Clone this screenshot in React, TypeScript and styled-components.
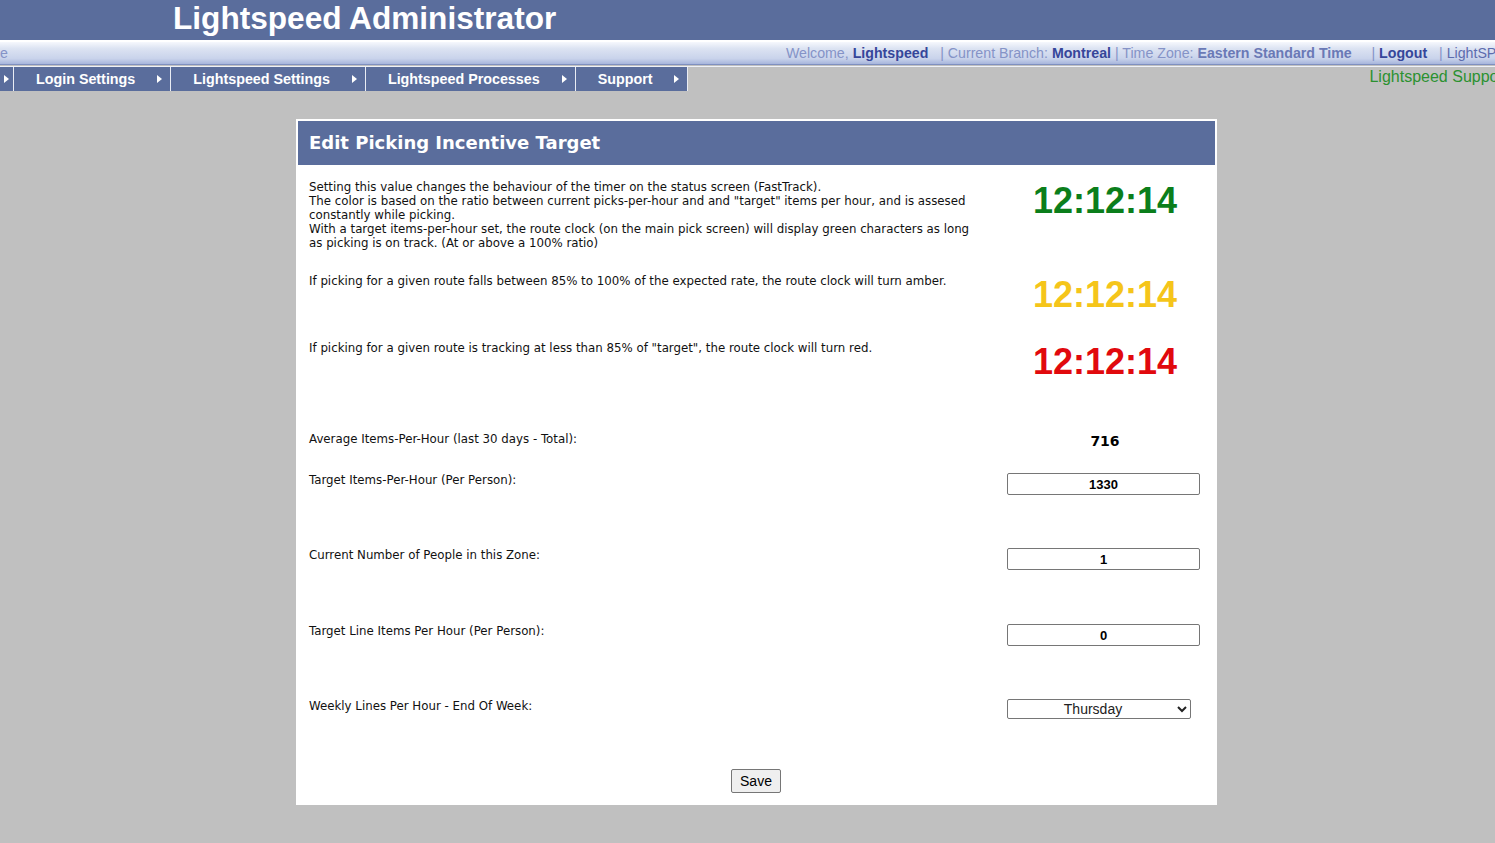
import styled, { createGlobalStyle } from "styled-components";

const MENU = ["Login Settings", "Lightspeed Settings", "Lightspeed Processes", "Support"];
const DAYS = ["Monday", "Tuesday", "Wednesday", "Thursday", "Friday", "Saturday", "Sunday"];

const BLUE = "#5a6d9c";

export default function App() {
  return (
    <>
      <GlobalStyle />
      <TitleBar>
        <Title>Lightspeed Administrator</Title>
      </TitleBar>
      <InfoBar>
        <Muted>e</Muted>
        <InfoText>
          <Muted>Welcome, </Muted>
          <Strong>Lightspeed</Strong>
          <Muted>{"   | Current Branch: "}</Muted>
          <Strong>Montreal</Strong>
          <Muted>{" | Time Zone: "}</Muted>
          <Strong $soft>Eastern Standard Time</Strong>
          <Muted>{"     | "}</Muted>
          <Strong>Logout</Strong>
          <Muted>{"   | "}</Muted>
          <Soft>LightSPEED Home</Soft>
        </InfoText>
      </InfoBar>
      <MenuBar>
        <MenuItem $stub>
          <Arrow />
        </MenuItem>
        {MENU.map((m) => (
          <MenuItem key={m}>
            <span>{m}</span>
            <Arrow />
          </MenuItem>
        ))}
        <SupportLink>Lightspeed Support</SupportLink>
      </MenuBar>

      <Panel>
        <PanelHeader>Edit Picking Incentive Target</PanelHeader>
        <PanelBody>
          <Row $height={94}>
            <Note>
              Setting this value changes the behaviour of the timer on the status screen (FastTrack).
              <br />
              The color is based on the ratio between current picks-per-hour and and "target" items per
              hour, and is assesed constantly while picking.
              <br />
              With a target items-per-hour set, the route clock (on the main pick screen) will display
              green characters as long as picking is on track. (At or above a 100% ratio)
            </Note>
            <Clock $color="#0b7e1b">12:12:14</Clock>
          </Row>
          <Row $height={67}>
            <Note>
              If picking for a given route falls between 85% to 100% of the expected rate, the route
              clock will turn amber.
            </Note>
            <Clock $color="#f5c51a">12:12:14</Clock>
          </Row>
          <Row $height={91}>
            <Note>
              If picking for a given route is tracking at less than 85% of "target", the route clock
              will turn red.
            </Note>
            <Clock $color="#e1090d">12:12:14</Clock>
          </Row>
          <Row $height={41}>
            <Note>Average Items-Per-Hour (last 30 days - Total):</Note>
            <Value>716</Value>
          </Row>
          <Row $height={75}>
            <Note>Target Items-Per-Hour (Per Person):</Note>
            <NumberInput defaultValue="1330" />
          </Row>
          <Row $height={76}>
            <Note>Current Number of People in this Zone:</Note>
            <NumberInput defaultValue="1" />
          </Row>
          <Row $height={75}>
            <Note>Target Line Items Per Hour (Per Person):</Note>
            <NumberInput defaultValue="0" />
          </Row>
          <Row $height={70}>
            <Note>Weekly Lines Per Hour - End Of Week:</Note>
            <DaySelect defaultValue="Thursday">
              {DAYS.map((d) => (
                <option key={d}>{d}</option>
              ))}
            </DaySelect>
          </Row>
          <Actions>
            <SaveButton>Save</SaveButton>
          </Actions>
        </PanelBody>
      </Panel>
    </>
  );
}

const GlobalStyle = createGlobalStyle`
  body {
    margin: 0;
    background: #c0c0c0;
    overflow: hidden;
    font-family: "Liberation Sans", Arial, sans-serif;
  }
`;

const TitleBar = styled.header`
  height: 40px;
  background: ${BLUE};
`;

const Title = styled.h1`
  margin: 0;
  padding-left: 173px;
  font-size: 31.6px;
  line-height: 36px;
  font-weight: bold;
  color: #fff;
`;

const InfoBar = styled.div`
  display: flex;
  align-items: center;
  height: 22px;
  border-top: 2px solid #fff;
  border-bottom: 1px solid #7f90c0;
  background: linear-gradient(#f6f8fd 0%, #dce3f2 30%, #c9d3eb 75%, #a7b5dc 100%);
  font-size: 14.2px;
  white-space: pre;
  overflow: hidden;
`;

const InfoText = styled.div`
  padding-left: 778px;
`;

const Muted = styled.span`
  color: #8593c7;
`;

const Soft = styled.span`
  color: #5d6cae;
`;

const Strong = styled.span<{ $soft?: boolean }>`
  font-weight: bold;
  color: ${(p) => (p.$soft ? "#6a79b6" : "#36469a")};
`;

const MenuBar = styled.nav`
  display: flex;
  height: 24px;
  margin-top: 1px;
  border-top: 1px solid #eef1f8;
  overflow: hidden;
  white-space: nowrap;
`;

const MenuItem = styled.div<{ $stub?: boolean }>`
  flex-shrink: 0;
  display: flex;
  align-items: center;
  gap: 22px;
  padding: ${(p) => (p.$stub ? "0 0 0 4px" : "0 8px 0 22px")};
  width: ${(p) => (p.$stub ? "9px" : "auto")};
  background: ${BLUE};
  border-right: 1px solid #e9ecf4;
  color: #fff;
  font-size: 14.3px;
  font-weight: bold;
`;

const Arrow = styled.span`
  width: 0;
  height: 0;
  border-left: 5px solid #fff;
  border-top: 4px solid transparent;
  border-bottom: 4px solid transparent;
`;

const SupportLink = styled.div`
  flex-shrink: 0;
  margin-left: 681px;
  padding-top: 1px;
  font-size: 16px;
  color: #2b9130;
`;

const Panel = styled.section`
  width: 917px;
  margin: 28px 0 0 296px;
  padding: 2px;
  background: #fff;
`;

const PanelHeader = styled.h2`
  margin: 0;
  height: 44px;
  padding-left: 11px;
  background: ${BLUE};
  color: #fff;
  font-family: "DejaVu Sans", Verdana, sans-serif;
  font-size: 18px;
  font-weight: bold;
  line-height: 44px;
`;

const PanelBody = styled.div`
  padding: 15px 12px 10px 11px;
  font-family: "DejaVu Sans", Verdana, sans-serif;
  font-size: 11.8px;
  line-height: 14px;
  color: #111;
`;

const Row = styled.div<{ $height: number }>`
  display: grid;
  grid-template-columns: 672px 196px;
  column-gap: 26px;
  align-items: start;
  min-height: ${(p) => p.$height}px;
`;

const Note = styled.div``;

const Clock = styled.div<{ $color: string }>`
  margin-top: 1px;
  text-align: center;
  font-family: "Liberation Sans", Arial, sans-serif;
  font-size: 36px;
  font-weight: bold;
  line-height: 40px;
  color: ${(p) => p.$color};
`;

const Value = styled.div`
  text-align: center;
  font-size: 14px;
  font-weight: bold;
  line-height: 18px;
  color: #000;
`;

const NumberInput = styled.input`
  box-sizing: border-box;
  width: 193px;
  height: 22px;
  border: 1px solid #767676;
  border-radius: 2px;
  text-align: center;
  font-family: "Liberation Sans", Arial, sans-serif;
  font-size: 13px;
  font-weight: bold;
  color: #000;
`;

const DaySelect = styled.select`
  box-sizing: border-box;
  width: 184px;
  height: 20px;
  border: 1px solid #767676;
  border-radius: 2px;
  background: #fff;
  text-align: center;
  text-align-last: center;
  font-family: "Liberation Sans", Arial, sans-serif;
  font-size: 14px;
  color: #222;
`;

const Actions = styled.div`
  display: flex;
  justify-content: center;
`;

const SaveButton = styled.button`
  height: 24px;
  padding: 0 8px;
  border: 1px solid #767676;
  border-radius: 2px;
  background: #efefef;
  font-family: "Liberation Sans", Arial, sans-serif;
  font-size: 14px;
  color: #000;
`;
